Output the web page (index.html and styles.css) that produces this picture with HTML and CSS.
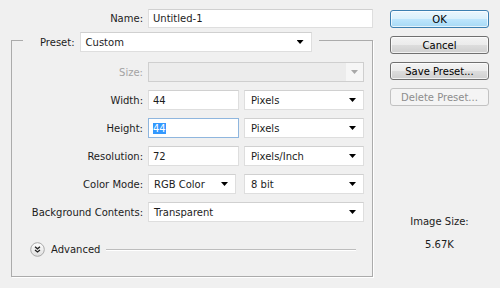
FILE: index.html
```html
<!DOCTYPE html>
<html>
<head>
<meta charset="utf-8">
<link rel="stylesheet" href="styles.css">
</head>
<body>
<div class="dialog">
  <div class="main">
    <div class="row name-row">
      <span class="lbl">Name:</span>
      <div class="field w-name"><span class="val">Untitled-1</span></div>
    </div>
    <fieldset class="group">
      <legend class="legend">
        <span class="legend-lbl">Preset:</span>
        <div class="field select w-preset"><span class="val">Custom</span><i class="arrow"></i></div>
      </legend>
      <div class="rows">
        <div class="row">
          <span class="lbl dis">Size:</span>
          <div class="field select disabled w-full"><span class="val"></span><span class="dis-btn"><i class="arrow gray"></i></span></div>
        </div>
        <div class="row">
          <span class="lbl">Width:</span>
          <div class="field w-num"><span class="val">44</span></div>
          <div class="field select w-unit"><span class="val">Pixels</span><i class="arrow"></i></div>
        </div>
        <div class="row">
          <span class="lbl">Height:</span>
          <div class="field focus w-num"><span class="val"><span class="sel">44</span></span></div>
          <div class="field select w-unit"><span class="val">Pixels</span><i class="arrow"></i></div>
        </div>
        <div class="row">
          <span class="lbl">Resolution:</span>
          <div class="field w-num"><span class="val">72</span></div>
          <div class="field select w-unit"><span class="val">Pixels/Inch</span><i class="arrow"></i></div>
        </div>
        <div class="row">
          <span class="lbl">Color Mode:</span>
          <div class="field select w-mode"><span class="val">RGB Color</span><i class="arrow"></i></div>
          <div class="field select w-unit"><span class="val">8 bit</span><i class="arrow"></i></div>
        </div>
        <div class="row">
          <span class="lbl">Background Contents:</span>
          <div class="field select w-full"><span class="val">Transparent</span><i class="arrow"></i></div>
        </div>
        <div class="adv-row">
          <svg class="adv-icon" width="15" height="15" viewBox="0 0 15 15">
            <defs>
              <linearGradient id="g" x1="0" y1="0" x2="0" y2="1">
                <stop offset="0" stop-color="#ffffff"/>
                <stop offset="1" stop-color="#dedede"/>
              </linearGradient>
            </defs>
            <circle cx="7.5" cy="7.5" r="6.8" fill="url(#g)" stroke="#a8a8a8" stroke-width="1"/>
            <polyline points="5,4.8 7.5,6.8 10,4.8" fill="none" stroke="#222" stroke-width="1.3"/>
            <polyline points="5,8 7.5,10 10,8" fill="none" stroke="#222" stroke-width="1.3"/>
          </svg>
          <span class="adv-lbl">Advanced</span>
          <span class="adv-line"></span>
        </div>
      </div>
    </fieldset>
  </div>
  <div class="side">
    <div class="btn default">OK</div>
    <div class="btn">Cancel</div>
    <div class="btn">Save Preset...</div>
    <div class="btn disabled">Delete Preset...</div>
    <div class="info">
      <div class="info-lbl">Image Size:</div>
      <div class="info-val">5.67K</div>
    </div>
  </div>
</div>
</body>
</html>
```

FILE: styles.css
```css
html, body {
  margin: 0;
  padding: 0;
  background: #f0f0f0;
}
body {
  font-family: "DejaVu Sans", Verdana, sans-serif;
  font-size: 10px;
  color: #1c1c1c;
  width: 500px;
  height: 288px;
  overflow: hidden;
}
.dialog {
  display: flex;
  align-items: flex-start;
}
.main {
  width: 380px;
  padding-top: 9px;
}
.row {
  display: flex;
  align-items: center;
  height: 20px;
}
.name-row {
  height: 19px;
}
.lbl {
  width: 143px;
  text-align: right;
  padding-right: 5px;
  box-sizing: border-box;
  padding-right: 0;
  margin-right: 5px;
  white-space: nowrap;
}
.group .lbl {
  width: 131px;
}
.lbl.dis {
  color: #a3a3a3;
}
.field {
  box-sizing: border-box;
  height: 100%;
  background: #fff;
  border: 1px solid #dedede;
  border-top-color: #d0d0d0;
  display: flex;
  align-items: center;
  padding-left: 4px;
  white-space: nowrap;
}
.field .val {
  flex: 1;
}
.select {
  padding-left: 5px;
  padding-right: 7px;
}
.field.focus {
  border-color: #8fb6de;
}
.sel {
  background: #3399ff;
  color: #fff;
}
.arrow {
  display: block;
  width: 7px;
  height: 4px;
  background: #000;
  clip-path: polygon(0 0, 100% 0, 50% 100%);
}
.arrow.gray {
  background: #a8a8a8;
}
.disabled.field {
  background: #ececec;
  border-color: #cfcfcf;
  padding-right: 0;
}
.dis-btn {
  width: 17px;
  height: 100%;
  background: #f6f6f6;
  display: flex;
  align-items: center;
  justify-content: center;
}
.w-name { width: 225px; }
.w-preset { width: 232px; }
.w-full { width: 216px; }
.w-num { width: 91px; margin-right: 5px; }
.w-unit { width: 120px; padding-left: 6px; }
.w-mode { width: 88px; margin-right: 8px; }

.group {
  margin: 0 0 0 11px;
  padding: 0 0 19px 0;
  width: 362px;
  box-sizing: border-box;
  border: 1px solid #ababab;
  box-shadow: 1px 1px 0 #ffffff;
}
.legend {
  margin-left: 11px;
  padding: 4px 7px 0 17px;
  display: flex;
  align-items: center;
}
.legend .field {
  height: 20px;
}
.legend-lbl {
  margin-right: 5px;
}
.rows {
  display: flex;
  flex-direction: column;
  gap: 8px;
  padding-top: 10px;
}
.adv-row {
  display: flex;
  align-items: center;
  height: 15px;
  margin-top: 12px;
  padding-left: 18px;
}
.adv-icon {
  display: block;
  margin-right: 6px;
}
.adv-lbl {
  margin-right: 6px;
}
.adv-line {
  width: 250px;
  height: 1px;
  background: #bdbdbd;
  box-shadow: 0 1px 0 #fff;
}

.side {
  margin-left: 10px;
  width: 99px;
  padding-top: 10px;
  display: flex;
  flex-direction: column;
  gap: 8px;
}
.btn {
  box-sizing: border-box;
  height: 18px;
  border: 1px solid #707070;
  border-radius: 3px;
  background: linear-gradient(#f3f3f3 0%, #ebebeb 50%, #dddddd 51%, #cfcfcf 100%);
  display: flex;
  align-items: center;
  justify-content: center;
  color: #000;
  box-shadow: inset 0 0 0 1px rgba(255,255,255,0.7);
}
.btn.default {
  border-color: #3c7fb1;
  background: linear-gradient(#eaf6fd 0%, #d9f0fc 50%, #bee6fd 51%, #a7d9f5 100%);
}
.btn.disabled {
  border-color: #c2c2c2;
  background: #f4f4f4;
  color: #8d8d8d;
  box-shadow: none;
}
.info {
  margin-top: 102px;
  text-align: center;
  line-height: 12px;
}
.info-val {
  margin-top: 11px;
}
```
